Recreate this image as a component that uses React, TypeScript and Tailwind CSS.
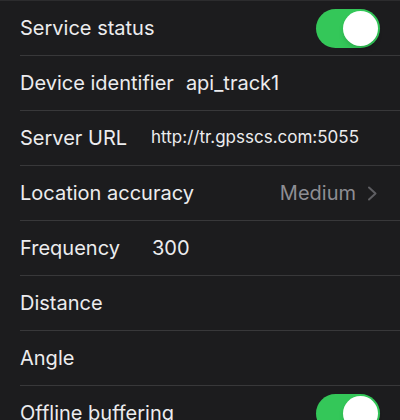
type Row = {
  label: string;
  value?: string;
  valueClass?: string;
  toggle?: boolean;
  select?: string;
};

const rows: Row[] = [
  { label: 'Service status', toggle: true },
  { label: 'Device identifier', value: 'api_track1', valueClass: 'ml-[12px] text-[20px]' },
  { label: 'Server URL', value: 'http://tr.gpsscs.com:5055', valueClass: 'ml-[24px] text-[17px]' },
  { label: 'Location accuracy', select: 'Medium' },
  { label: 'Frequency', value: '300', valueClass: 'ml-[32px] text-[20px]' },
  { label: 'Distance' },
  { label: 'Angle' },
  { label: 'Offline buffering', toggle: true },
];

function Toggle() {
  return (
    <div className="w-[64px] h-[39px] rounded-full bg-[#34c759] p-[2px] flex justify-end shrink-0">
      <div className="w-[35px] h-[35px] rounded-full bg-white shadow-md" />
    </div>
  );
}

function Chevron() {
  return (
    <svg width="11" height="15" viewBox="0 0 11 15" fill="none" className="shrink-0">
      <path d="M2 1.5 L8.5 7.5 L2 13.5" stroke="#5e5e62" strokeWidth="2" strokeLinecap="round" strokeLinejoin="round" />
    </svg>
  );
}

export default function App() {
  return (
    <div
      className="w-[400px] h-[420px] overflow-hidden bg-[#1c1c1e] text-[#ececee] border-t border-[#2c2c2e]"
      style={{ fontFamily: 'Inter, "Noto Sans", sans-serif' }}
    >
      {rows.map((row) => (
        <div key={row.label} className="pl-5">
          <div className="h-[55px] flex items-center pr-5 border-b border-[#38383a]">
            <span className="text-[20px] whitespace-nowrap">{row.label}</span>
            {row.value && <span className={`${row.valueClass} whitespace-nowrap`}>{row.value}</span>}
            <div className="flex-1" />
            {row.select && (
              <div className="flex items-center gap-[11px] text-[#8e8e93] pr-[2px]">
                <span className="text-[20px]">{row.select}</span>
                <Chevron />
              </div>
            )}
            {row.toggle && <Toggle />}
          </div>
        </div>
      ))}
    </div>
  );
}
